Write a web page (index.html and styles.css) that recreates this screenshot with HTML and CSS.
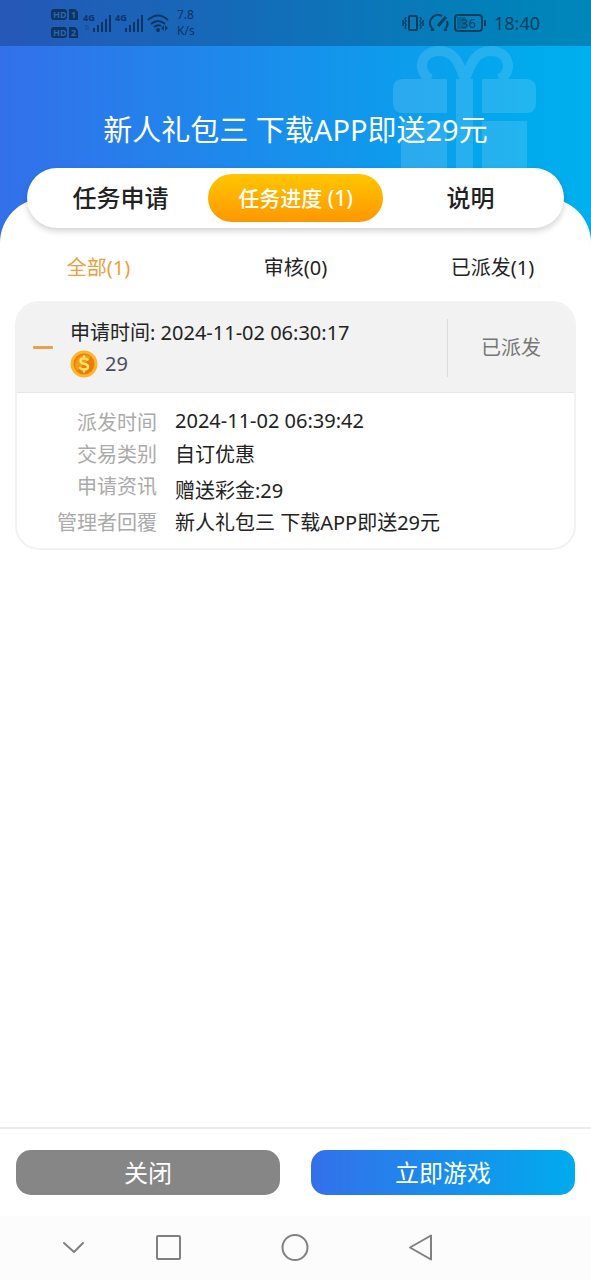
FILE: index.html
```html
<!DOCTYPE html>
<html lang="zh-CN">
<head>
<meta charset="utf-8">
<meta name="viewport" content="width=device-width, initial-scale=1">
<title>任务进度</title>
<link rel="stylesheet" href="styles.css">
</head>
<body>
<div class="page">
  <header class="hero">
    <svg class="gift" viewBox="0 0 144 152" aria-hidden="true">
      <g fill="none" stroke="#fff" stroke-width="10">
        <path d="M38 33C24 28 26 5 46 5C62 5 66 18 72 33C78 18 82 5 98 5C118 5 120 28 106 33"/>
      </g>
      <g fill="#fff">
        <path d="M10 33H54V67H10Q0 67 0 57V43Q0 33 10 33Z"/>
        <path d="M89 33H133Q143 33 143 43V57Q143 67 133 67H89Z"/>
        <path d="M63 33H80V152H63Z"/>
        <path d="M8 75H54V152H8Z"/>
        <path d="M89 75H134V152H89Z"/>
      </g>
    </svg>
    <div class="status">
      <div class="status-side">
        <svg width="28" height="32" viewBox="0 0 28 32" aria-hidden="true">
          <g fill="currentColor"><rect x="0" y="2" width="16" height="11" rx="3"/><path d="M18 2h6l3 3v8h-9z"/><rect x="0" y="20" width="16" height="11" rx="3"/><path d="M18 20h6l3 3v8h-9z"/></g>
          <g class="badge-text"><text x="2" y="11">HD</text><text x="20" y="11">1</text><text x="2" y="29">HD</text><text x="20" y="29">2</text></g>
        </svg>
        <svg width="28" height="24" viewBox="0 0 28 24" aria-hidden="true">
          <text class="net-text" x="0" y="10">4G</text>
          <path d="M3 14v5m-1-4l1-1m2 0v5m1-1l-1 1" stroke="currentColor" stroke-width="1" opacity=".4"/>
          <path d="M11 17v4M15 14v7M19 11v10M23 8v13M27 4v17" stroke="currentColor" stroke-width="2"/>
        </svg>
        <svg width="28" height="24" viewBox="0 0 28 24" aria-hidden="true">
          <text class="net-text" x="0" y="10">4G</text>
          <path d="M11 17v4M15 14v7M19 11v10M23 8v13M27 4v17" stroke="currentColor" stroke-width="2"/>
        </svg>
        <svg width="22" height="20" viewBox="0 0 22 20" aria-hidden="true">
          <g fill="none" stroke="currentColor" stroke-width="2"><path d="M1 7Q11-2 21 7"/><path d="M4 11Q11 5 18 11"/><path d="M7 14Q11 11 14 13"/></g>
          <circle cx="11" cy="17" r="2" fill="currentColor"/><path d="M17 12v6l-3-3zM18 12v6l3-3z" fill="currentColor"/>
        </svg>
        <div class="speed"><span>7.8</span><span>K/s</span></div>
      </div>
      <div class="status-side status-right">
        <svg width="22" height="18" viewBox="0 0 22 18" fill="none" stroke="currentColor" aria-hidden="true">
          <rect x="7" y="2" width="8" height="14" rx="1" stroke-width="2"/><path d="M4 3L3 5l1 2-1 2 1 2-1 2 1 2M1 6v6M18 3l1 2-1 2 1 2-1 2 1 2-1 2M21 6v6" stroke-width="1.500"/>
        </svg>
        <svg width="20" height="18" viewBox="0 0 20 18" fill="none" stroke="currentColor" stroke-width="2" aria-hidden="true">
          <path d="M5 16A8 8 0 0 1 13 2M18 7a8 8 0 0 1-3 9M2 16h3M15 16h3"/><path d="M9 12L17 3" stroke-width="3"/>
        </svg>
        <svg width="33" height="18" viewBox="0 0 33 18" aria-hidden="true">
          <rect x="1" y="1" width="27" height="16" rx="3" fill="none" stroke="currentColor" stroke-width="2"/><rect x="3" y="3" width="9" height="12" fill="currentColor" opacity=".35"/><path d="M31 6v6" stroke="currentColor" stroke-width="2"/>
          <text class="battery-text" x="7" y="14">36</text>
        </svg>
        <span class="clock">18:40</span>
      </div>
    </div>
    <h1 class="title">新人礼包三 下载APP即送29元</h1>
  </header>

  <main class="panel">
    <nav class="tabs">
      <button class="tab" type="button">任务申请</button>
      <button class="tab tab-active" type="button">任务进度 (1)</button>
      <button class="tab" type="button">说明</button>
    </nav>
    <nav class="filters">
      <button class="filter filter-active" type="button">全部(1)</button>
      <button class="filter" type="button">审核(0)</button>
      <button class="filter" type="button">已派发(1)</button>
    </nav>

    <article class="card">
      <div class="card-head">
        <button class="toggle" type="button" aria-label="收起"><span class="dash"></span></button>
        <div class="summary">
          <p class="summary-time">申请时间: 2024-11-02 06:30:17</p>
          <p class="amount">
            <svg width="28" height="28" viewBox="0 0 28 28" aria-hidden="true">
              <circle cx="14" cy="14" r="13.500" fill="#fdb62b"/>
              <circle cx="14" cy="14" r="10.500" fill="#e87d08"/>
              <path d="M7 21A10 10 0 0 1 21 7Z" fill="#f59a12"/>
              <path d="M18 10.500Q17 8.500 14 8.500Q10.500 8.500 10.500 11Q10.500 13.200 14 13.800Q18 14.500 18 17Q18 19.500 14 19.500Q10.500 19.500 9.800 17M14 5.500V8M14 20V22.500" fill="none" stroke="#ffe36b" stroke-width="2.400"/>
            </svg>
            <span>29</span>
          </p>
        </div>
        <div class="state">已派发</div>
      </div>
      <dl class="details">
        <dt>派发时间</dt><dd class="detail-date">2024-11-02 06:39:42</dd>
        <dt>交易类别</dt><dd>自订优惠</dd>
        <dt>申请资讯</dt><dd class="detail-note">赠送彩金:29</dd>
        <dt>管理者回覆</dt><dd>新人礼包三 下载APP即送29元</dd>
      </dl>
    </article>
  </main>

  <footer class="actions">
    <button class="action action-close" type="button">关闭</button>
    <button class="action action-play" type="button">立即游戏</button>
  </footer>

  <nav class="system">
    <button class="key" type="button" aria-label="隐藏"><svg width="28" height="28" viewBox="0 0 28 28"><path d="M5 9l10 9 9-9"/></svg></button>
    <button class="key" type="button" aria-label="最近任务"><svg width="28" height="28" viewBox="0 0 28 28"><rect x="2" y="2" width="23" height="23" rx="1"/></svg></button>
    <button class="key" type="button" aria-label="主页"><svg width="28" height="28" viewBox="0 0 28 28"><circle cx="14" cy="13.500" r="12.500"/></svg></button>
    <button class="key" type="button" aria-label="返回"><svg width="28" height="28" viewBox="0 0 28 28"><path d="M3 13.500L24 1.500V25.500Z"/></svg></button>
  </nav>
</div>
</body>
</html>
```
FILE: styles.css
```css
* {
  box-sizing: border-box;
}

body {
  margin: 0;
  background: #fff;
  color: #222;
  font-family: "Noto Sans", "Noto Sans CJK SC", sans-serif;
  font-size: 20px;
  line-height: 32px;
}

h1, p, dl, dd {
  margin: 0;
}

button {
  border: 0;
  padding: 0;
  background: none;
  color: inherit;
  font: inherit;
  cursor: pointer;
}

svg {
  display: block;
  flex: none;
}

.page {
  display: flex;
  flex-direction: column;
  min-height: 100vh;
}

.hero {
  position: relative;
  margin-bottom: -45px;
  padding-bottom: 92px;
  background: linear-gradient(90deg, #3370ea 0%, #00abed 90%, #00b0ee 100%);
}

.gift {
  position: absolute;
  top: 46px;
  right: 54px;
  width: 144px;
  height: 152px;
  opacity: 0.13;
}

.status {
  position: relative;
  display: flex;
  justify-content: space-between;
  height: 46px;
  padding: 0 51px;
  background: rgba(0, 20, 40, 0.26);
  color: #0c3563;
}

.status-side {
  display: flex;
  align-items: center;
  gap: 4px;
}

.status-right {
  gap: 5px;
  color: #07405f;
}

.badge-text {
  fill: #2b68ae;
  font-size: 9px;
  font-weight: 700;
}

.net-text {
  fill: currentColor;
  font-size: 9px;
  font-weight: 700;
}

.battery-text {
  fill: currentColor;
  font-size: 13px;
}

.speed {
  display: flex;
  flex-direction: column;
  padding-left: 4px;
  font-size: 12px;
  line-height: 16px;
}

.clock {
  padding-left: 2px;
  font-size: 18px;
}

.title {
  position: relative;
  padding-top: 63px;
  color: #fff;
  font-size: 29px;
  font-weight: 400;
  line-height: 42px;
  text-align: center;
}

.panel {
  position: relative;
  flex: 1;
  padding: 0 15px 24px;
  border-radius: 45px 45px 0 0;
  background: #fff;
}

.tabs {
  display: grid;
  grid-template-columns: repeat(3, 1fr);
  height: 60px;
  margin: -30px 12px 0;
  padding: 6px;
  border-radius: 30px;
  background: #fff;
  box-shadow: 0 3px 6px rgba(0, 0, 0, 0.18);
}

.tab {
  border-radius: 24px;
  font-size: 24px;
  font-weight: 500;
}

.tab-active {
  background: linear-gradient(#ffc600, #ff9700);
  color: #fff;
  font-size: 21px;
}

.filters {
  display: grid;
  grid-template-columns: repeat(3, 1fr);
  margin: 0 -15px;
  padding: 24px 0 17px;
}

.filter-active {
  color: #eb9f3e;
}

.card {
  overflow: hidden;
  border: 2px solid #f2f2f2;
  border-radius: 24px;
}

.card-head {
  display: flex;
  align-items: center;
  height: 90px;
  border-bottom: 1px solid #e6e6e6;
  background: #f2f2f2;
}

.toggle {
  width: 53px;
  height: 57px;
  padding-left: 16px;
}

.dash {
  display: block;
  width: 20px;
  height: 3px;
  border-radius: 1px;
  background: #eca04c;
}

.summary {
  flex: 1;
}

.amount {
  display: flex;
  align-items: center;
  gap: 7px;
  height: 29px;
  color: #4c4f59;
}

.state {
  width: 127px;
  border-left: 1px solid #dcdcdc;
  color: #777;
  line-height: 58px;
  text-align: center;
}

.details {
  display: grid;
  grid-template-columns: 140px 1fr;
  column-gap: 18px;
  padding: 14px 0 9px;
}

.details dt {
  color: #aaa;
  text-align: right;
}

.detail-date {
  line-height: 28px;
}

.detail-note {
  padding-top: 4px;
}

.actions {
  display: grid;
  grid-template-columns: 1fr 1fr;
  gap: 31px;
  padding: 21px 16px;
  border-top: 2px solid #ebebeb;
}

.action {
  height: 45px;
  border-radius: 15px;
  color: #fff;
  font-size: 24px;
}

.action-close {
  background: #868686;
}

.action-play {
  background: linear-gradient(90deg, #3370ea, #00abed);
}

.system {
  display: grid;
  grid-template-columns: 64fr 126fr 126fr 126fr;
  height: 64px;
  padding: 0 18% 0 7%;
  background: #fcfcfc;
}

.key {
  display: grid;
  place-items: center;
}

.key svg {
  fill: none;
  stroke: #808080;
  stroke-width: 2;
  stroke-linejoin: round;
  stroke-linecap: round;
}
```
